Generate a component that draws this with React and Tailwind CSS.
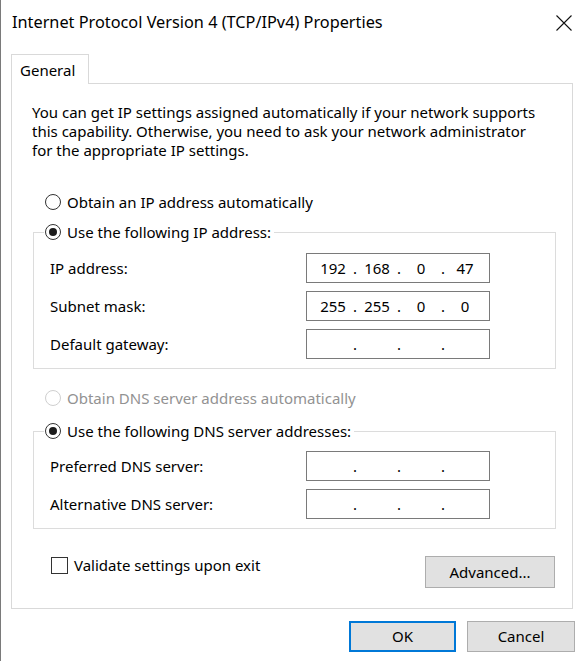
import { Fragment } from 'react'

function Radio({ checked, disabled }) {
  return (
    <span
      className={`flex h-4 w-4 shrink-0 items-center justify-center rounded-full border bg-white ${
        disabled ? 'border-[#cfcfcf]' : 'border-[#333333]'
      }`}
    >
      {checked && <span className="h-2 w-2 rounded-full bg-[#1b1b1b]" />}
    </span>
  )
}

function IpBox({ parts = ['', '', '', ''] }) {
  return (
    <div className="flex h-[30px] w-[184px] items-center border border-[#7a7a7a] bg-white pl-[8px] text-[15px] leading-none">
      {parts.map((p, i) => (
        <Fragment key={i}>
          <span className="w-[36px] text-center">{p}</span>
          {i < 3 && <span className="w-[8px] text-center">.</span>}
        </Fragment>
      ))}
    </div>
  )
}

function Row({ label, parts }) {
  return (
    <div className="flex items-center pl-[6px]">
      <span className="w-[256px]">{label}</span>
      <IpBox parts={parts} />
    </div>
  )
}

export default function App() {
  return (
    <div className="h-[661px] w-[584px] overflow-hidden bg-white text-[15px] text-black shadow-[inset_1px_0_0_#7a7a7a] font-['Noto_Sans','Open_Sans',sans-serif]">
      {/* title bar */}
      <div className="flex h-[45px] items-center justify-between pl-[12px] pr-[12px]">
        <span className="text-[16.3px]">Internet Protocol Version 4 (TCP/IPv4) Properties</span>
        <svg width="16" height="16" viewBox="0 0 16 16" className="mt-px">
          <path d="M0.5 0.5 L15.5 15.5 M15.5 0.5 L0.5 15.5" stroke="#111" strokeWidth="1.1" fill="none" />
        </svg>
      </div>

      {/* tab */}
      <div className="mt-[9px] flex pl-[11px]">
        <div className="relative z-10 -mb-px flex h-[30px] w-[78px] items-center border border-b-0 border-[#d9d9d9] bg-white pl-[8px] pt-[2px]">
          General
        </div>
      </div>

      {/* panel */}
      <div className="mx-[11px] flex h-[526px] flex-col border border-[#d9d9d9]">
        <p className="pl-[20px] pt-[19px] leading-[19px]">
          You can get IP settings assigned automatically if your network supports
          <br />
          this capability. Otherwise, you need to ask your network administrator
          <br />
          for the appropriate IP settings.
        </p>

        <div className="ml-[33px] mt-[32px] flex h-[20px] items-center gap-[6px]">
          <Radio />
          <span>Obtain an IP address automatically</span>
        </div>

        <fieldset className="ml-[21px] mt-[10px] w-[523px] border border-[#dcdcdc] pb-[9px] pl-[10px] pt-[11px]">
          <legend className="pl-px pr-[3px]">
            <span className="flex h-[20px] items-center gap-[6px]">
              <Radio checked />
              <span>Use the following IP address:</span>
            </span>
          </legend>
          <div className="flex flex-col gap-[8px]">
            <Row label="IP address:" parts={['192', '168', '0', '47']} />
            <Row label="Subnet mask:" parts={['255', '255', '0', '0']} />
            <Row label="Default gateway:" />
          </div>
        </fieldset>

        <div className="ml-[33px] mt-[19px] flex h-[20px] items-center gap-[6px] text-[#929292]">
          <Radio disabled />
          <span>Obtain DNS server address automatically</span>
        </div>

        <fieldset className="ml-[21px] mt-[13px] w-[523px] border border-[#dcdcdc] pb-[9px] pl-[10px] pt-[10px]">
          <legend className="pl-px pr-[3px]">
            <span className="flex h-[20px] items-center gap-[6px]">
              <Radio checked />
              <span>Use the following DNS server addresses:</span>
            </span>
          </legend>
          <div className="flex flex-col gap-[8px]">
            <Row label="Preferred DNS server:" />
            <Row label="Alternative DNS server:" />
          </div>
        </fieldset>

        <div className="mt-[27px] flex items-start justify-between pl-[39px] pr-[17px]">
          <div className="flex h-[18px] items-center gap-[6px] pt-px">
            <span className="h-[17px] w-[17px] border border-[#333333] bg-white" />
            <span>Validate settings upon exit</span>
          </div>
          <button className="flex h-[32px] w-[130px] items-center justify-center border border-[#adadad] bg-[#e1e1e1]">
            Advanced...
          </button>
        </div>
      </div>

      {/* dialog buttons */}
      <div className="mt-[12px] flex justify-end gap-[11px] pr-[9px]">
        <button className="flex h-[31px] w-[107px] items-center justify-center border-2 border-[#0078d7] bg-[#e1e1e1]">
          OK
        </button>
        <button className="flex h-[31px] w-[108px] items-center justify-center border border-[#adadad] bg-[#e1e1e1]">
          Cancel
        </button>
      </div>
    </div>
  )
}
